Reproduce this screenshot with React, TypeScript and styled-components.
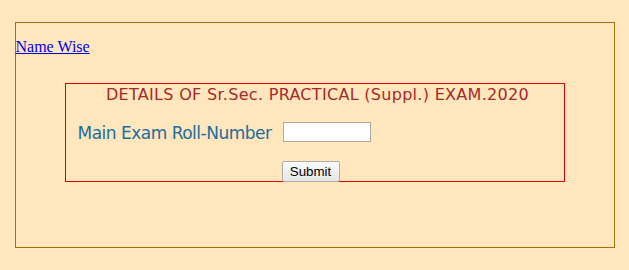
import styled, { createGlobalStyle } from 'styled-components';

const GlobalStyle = createGlobalStyle`
  html, body {
    margin: 0;
    padding: 0;
    background: #ffe6bc;
  }
`;

const Frame = styled.div`
  box-sizing: border-box;
  width: 600px;
  height: 226px;
  margin: 22px auto 0;
  border: 1px solid #a87000;
  padding-top: 15px;
`;

const NameLink = styled.a`
  display: inline-block;
  font-family: 'Liberation Serif', 'Times New Roman', serif;
  font-size: 16px;
  line-height: 18px;
  color: #0000ee;
  text-decoration: underline;
`;

const DetailsBox = styled.div`
  box-sizing: border-box;
  width: 500px;
  height: 99px;
  margin: 27px auto 0;
  border: 1px solid #e00000;
  display: flex;
  flex-direction: column;
`;

const Title = styled.div`
  font-family: 'DejaVu Sans', Verdana, sans-serif;
  font-size: 16px;
  letter-spacing: 0.3px;
  line-height: 19px;
  color: #a52a2a;
  text-align: center;
  padding: 1px 0 0 6px;
`;

const FormGrid = styled.div`
  display: grid;
  grid-template-columns: auto auto;
  justify-content: start;
  align-items: center;
  column-gap: 11px;
  row-gap: 18px;
  padding: 17px 0 0 12px;
`;

const Label = styled.label`
  font-family: 'DejaVu Sans', Verdana, sans-serif;
  font-size: 17px;
  letter-spacing: -0.5px;
  color: #1a6ea0;
  padding-top: 2px;
`;

const RollInput = styled.input`
  box-sizing: border-box;
  width: 88px;
  height: 20px;
  border: 1px solid #a9a9a9;
  background: #fff;
  padding: 1px 2px;
  margin: 0;
`;

const SubmitButton = styled.button`
  box-sizing: border-box;
  justify-self: start;
  margin-left: -1px;
  width: 58px;
  height: 21px;
  padding: 0;
  font-family: 'Liberation Sans', Arial, sans-serif;
  font-size: 13.33px;
  color: #000;
  background: linear-gradient(#fafafa, #e6e6e6);
  border: 1px solid #adadad;
  border-radius: 2px;
`;

export default function App() {
  return (
    <>
      <GlobalStyle />
      <Frame>
        <NameLink href="#">Name Wise</NameLink>
        <DetailsBox>
          <Title>DETAILS OF Sr.Sec. PRACTICAL (Suppl.) EXAM.2020</Title>
          <FormGrid>
            <Label htmlFor="roll">Main Exam Roll-Number</Label>
            <RollInput id="roll" type="text" />
            <span />
            <SubmitButton type="button">Submit</SubmitButton>
          </FormGrid>
        </DetailsBox>
      </Frame>
    </>
  );
}
